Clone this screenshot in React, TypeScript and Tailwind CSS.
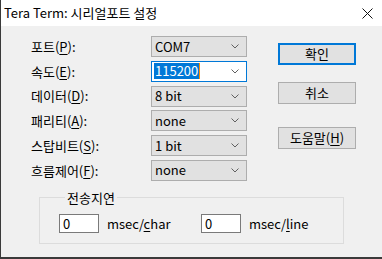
import React from "react";

const font = { fontFamily: '"Noto Sans CJK KR", "Noto Sans", sans-serif' };

function Chevron() {
  return (
    <svg width="8" height="5" viewBox="0 0 8 5" className="shrink-0">
      <polyline points="0.5,0.5 4,4 7.5,0.5" fill="none" stroke="#606060" strokeWidth="1" />
    </svg>
  );
}

function Combo({ value, focused }: { value: string; focused?: boolean }) {
  if (focused) {
    return (
      <div className="h-[21px] w-[96px] border border-[#0078d7] bg-white flex items-center pl-[2px] pr-[7px] justify-between">
        <span className="flex items-center">
          <span className="bg-[#0078d7] text-white leading-[16px] px-px">{value}</span>
          <span className="w-px h-[16px] bg-[#ff8c00]" />
        </span>
        <Chevron />
      </div>
    );
  }
  return (
    <div className="h-[21px] w-[96px] border border-[#adadad] bg-[#e1e1e1] flex items-center pl-[3px] pr-[7px] justify-between">
      <span className="leading-[16px]">{value}</span>
      <Chevron />
    </div>
  );
}

function Label({ text, key1 }: { text: string; key1: string }) {
  return (
    <div className="flex items-center h-[21px] text-black">
      {text}(<span className="underline underline-offset-2">{key1}</span>):
    </div>
  );
}

function Btn({ children, focused }: { children: React.ReactNode; focused?: boolean }) {
  return (
    <div
      className={`w-[78px] h-[22px] flex items-center justify-center bg-[#e1e1e1] ${
        focused ? "border-2 border-[#0078d7]" : "border border-[#adadad]"
      }`}
    >
      {children}
    </div>
  );
}

export default function App() {
  const rows = [
    { label: "포트", k: "P", value: "COM7" },
    { label: "속도", k: "E", value: "115200", focused: true },
    { label: "데이터", k: "D", value: "8 bit" },
    { label: "패리티", k: "A", value: "none" },
    { label: "스탑비트", k: "S", value: "1 bit" },
    { label: "흐름제어", k: "F", value: "none" },
  ];

  return (
    <div
      className="w-[382px] h-[259px] border-l border-b-2 border-[#3a3a3a] bg-[#f0f0f0] text-[13px] text-black flex flex-col overflow-hidden"
      style={font}
    >
      {/* title bar */}
      <div className="h-[26px] bg-white flex items-center justify-between pl-[3px] pr-[9px] shrink-0">
        <span className="text-[13px]">Tera Term: 시리얼포트 설정</span>
        <svg width="11" height="11" viewBox="0 0 11 11">
          <path d="M0.5 0.5 L10.5 10.5 M10.5 0.5 L0.5 10.5" stroke="#111" strokeWidth="1" />
        </svg>
      </div>

      <div className="flex pl-[30px] pt-[10px]">
        <div className="grid grid-cols-[120px_96px] gap-y-[3.8px]">
          {rows.map((r) => (
            <React.Fragment key={r.k}>
              <Label text={r.label} key1={r.k} />
              <Combo value={r.value} focused={r.focused} />
            </React.Fragment>
          ))}
        </div>
        <div className="ml-[31px] pt-[7px] flex flex-col gap-[17px]">
          <Btn focused>확인</Btn>
          <Btn>취소</Btn>
          <div className="mt-[6px]">
            <Btn>
              도움말(<span className="underline underline-offset-2">H</span>)
            </Btn>
          </div>
        </div>
      </div>

      {/* group */}
      <fieldset className="ml-[38px] mt-[9px] w-[305px] border border-[#dcdcdc] pl-[19px] pb-[10px] pt-[8px]">
        <legend className="px-[2px] ml-[6px] leading-[16px]">전송지연</legend>
        <div className="flex items-center">
          <div className="w-[142px] flex items-center">
            <div className="w-[40px] h-[19px] border border-[#7a7a7a] bg-white pl-[3px] leading-[17px]">0</div>
            <span className="ml-[8px]">
              msec/<span className="underline underline-offset-2">c</span>har
            </span>
          </div>
          <div className="w-[40px] h-[19px] border border-[#7a7a7a] bg-white pl-[3px] leading-[17px]">0</div>
          <span className="ml-[8px]">
            msec/<span className="underline underline-offset-2">l</span>ine
          </span>
        </div>
      </fieldset>
    </div>
  );
}
